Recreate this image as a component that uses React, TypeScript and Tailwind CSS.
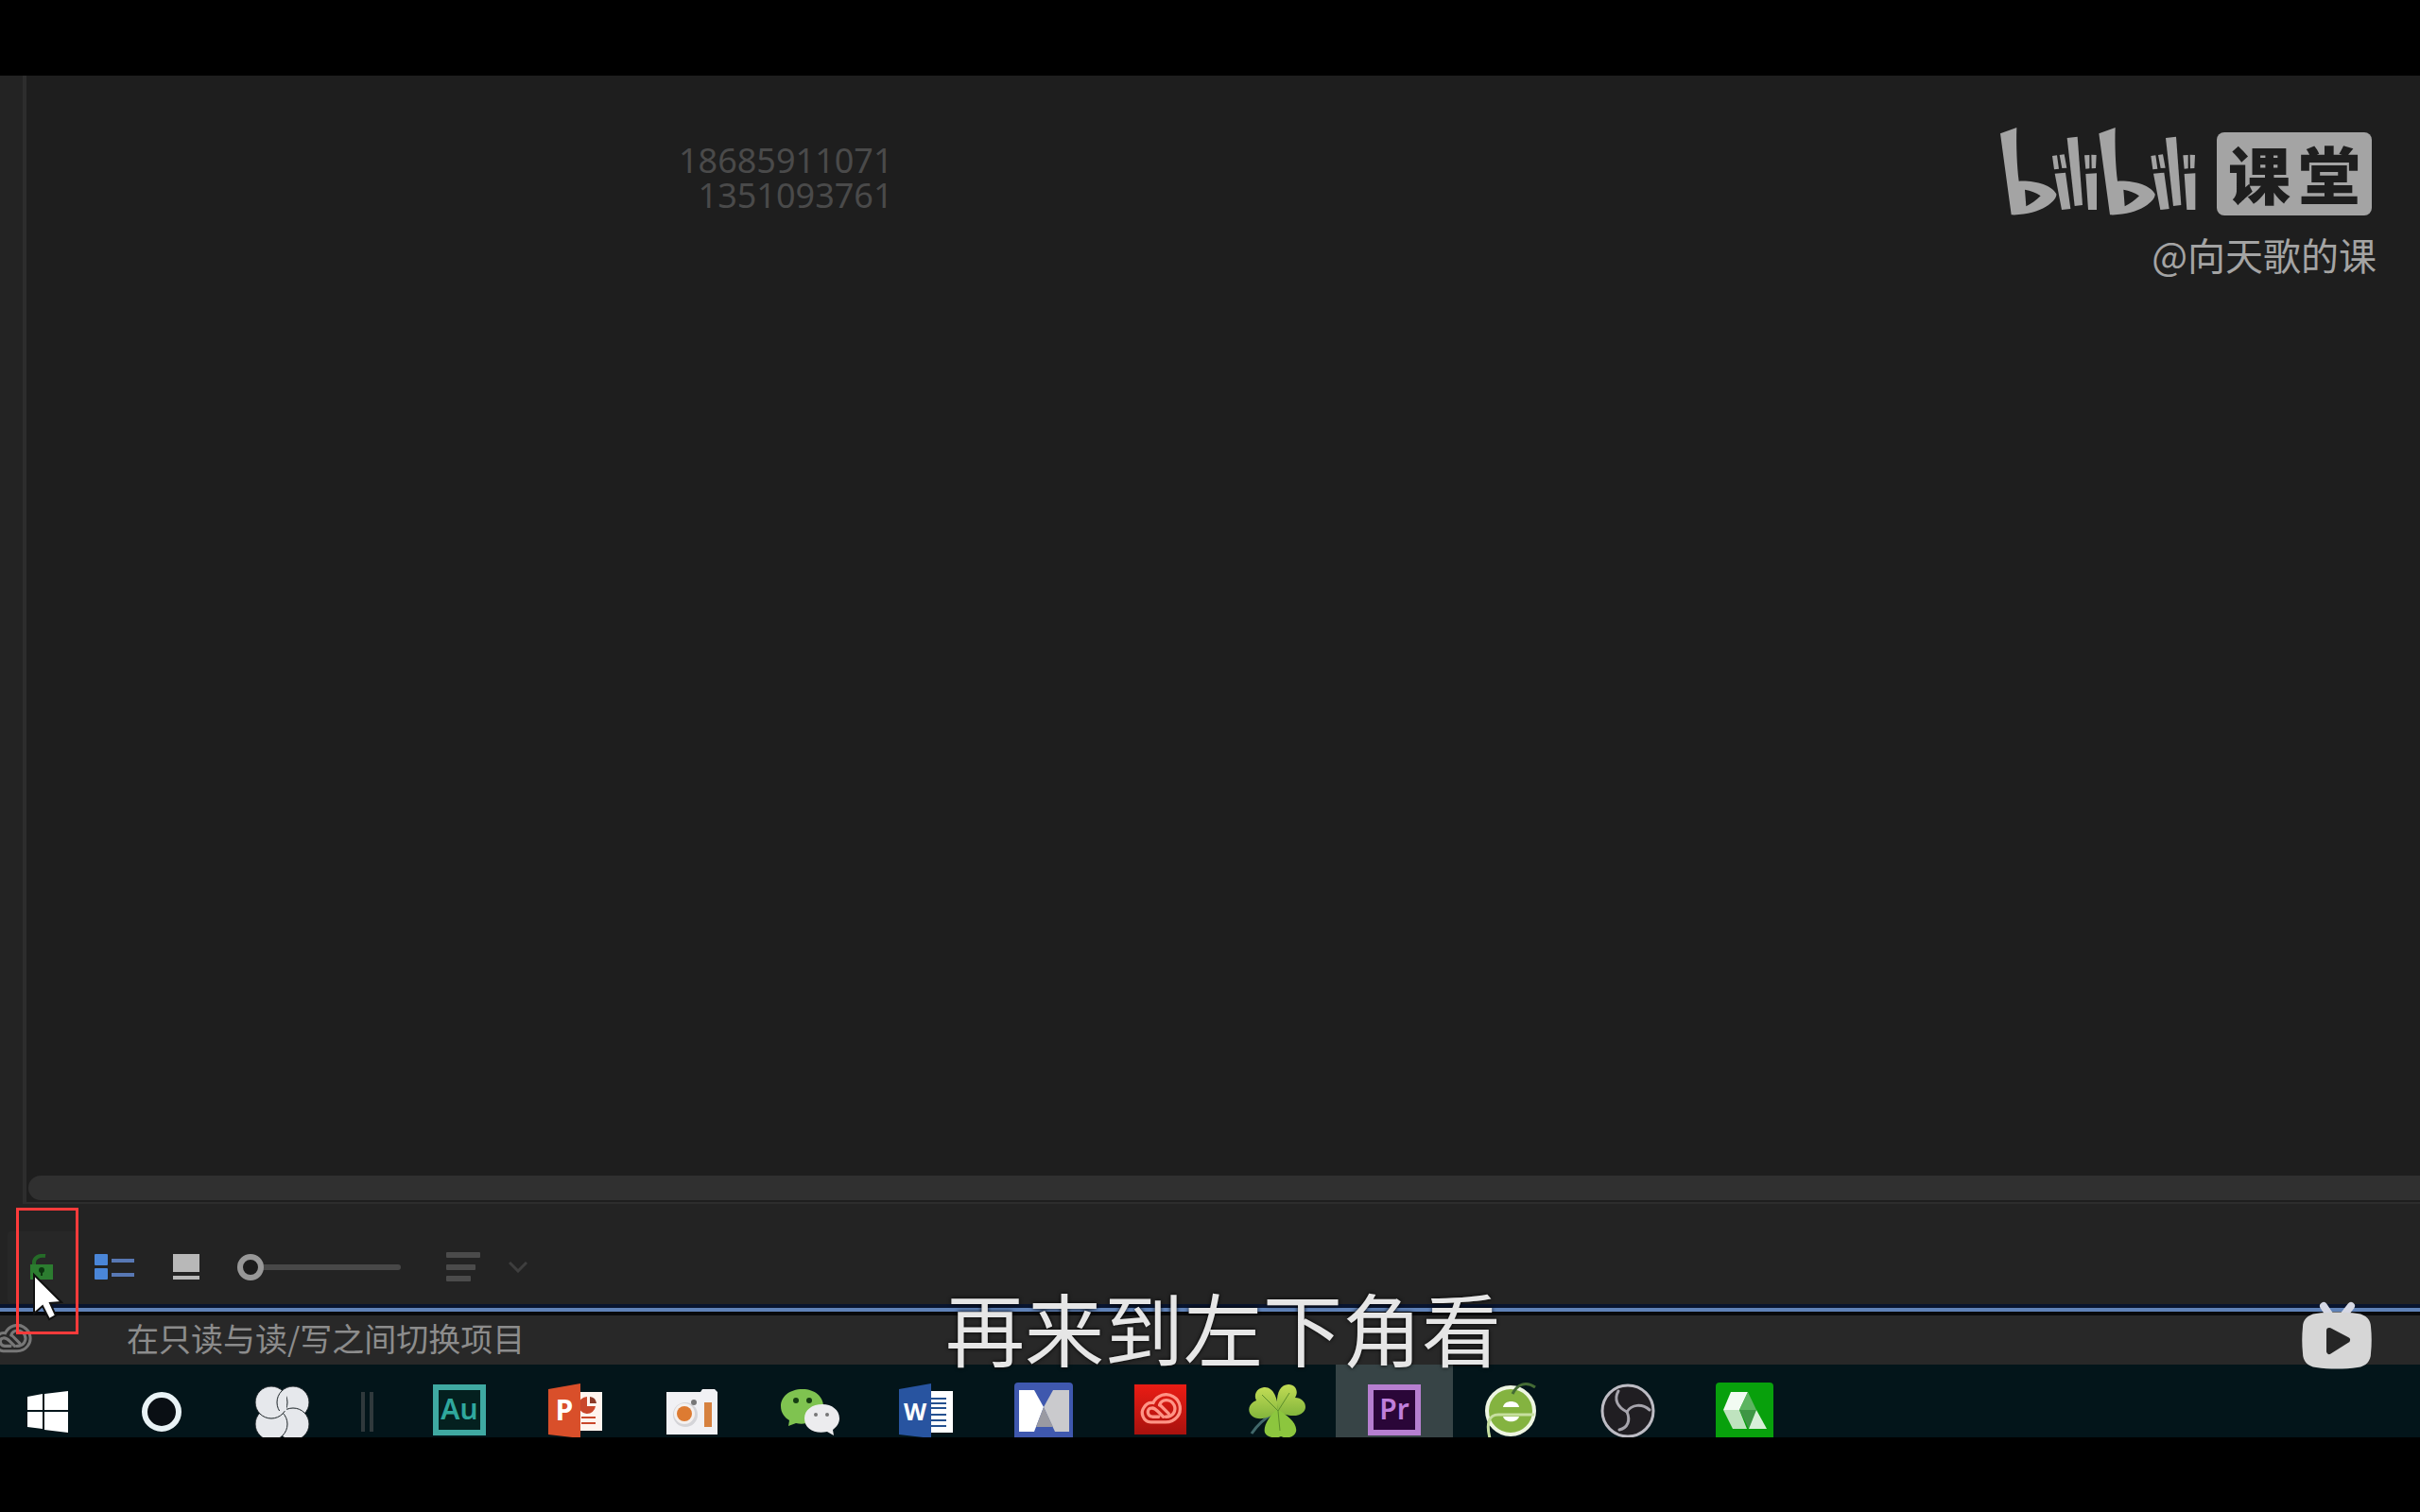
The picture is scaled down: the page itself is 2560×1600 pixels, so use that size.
import type { ReactNode } from "react";

const CJK = "font-['Noto_Sans_CJK_SC',sans-serif]";

/* ---------- watermark ---------- */

function Bili() {
  return (
    <>
      <path
        fillRule="evenodd"
        d="M108 92 L160 73 C158 130 161 195 167 243 C215 240 272 255 286 284 C290 304 235 353 143 350 Z M186 270 C205 273 222 280 236 290 C222 304 207 315 190 323 Z"
      />
      <path d="M273 163 L288 161 L294 204 L279 206 Z M296 160 L311 158 L319 201 L304 202 Z M281 219 L315 216 L331 331 L303 334 Z" />
      <path d="M320 106 L353 102 L369 319 L344 322 Z" />
      <path d="M375 161 L391 160 L391 203 L379 204 Z M397 159 L413 160 L411 202 L398 203 Z M379 220 L414 218 L414 334 L387 334 Z" />
    </>
  );
}

function Watermark() {
  return (
    <div className="absolute top-[54px] right-[46px] flex flex-col items-end text-[#a4a4a4]">
      <div className="mr-[5px] flex items-start">
        <svg className="h-[95px] w-[209px]" viewBox="105 70 627 285" fill="currentColor" role="img" aria-label="bilibili">
          <Bili />
          <g transform="translate(313 0)">
            <Bili />
          </g>
        </svg>
        <div
          className={`mt-[6px] ml-[21px] flex h-[88px] w-[164px] items-center justify-center gap-2 rounded-lg bg-[#a4a4a4] pb-1 text-[66px] leading-[66px] font-black text-[#1e1e1e] ${CJK}`}
        >
          <span>课</span>
          <span>堂</span>
        </div>
      </div>
      <div className={`mt-4 text-[40px] leading-[48px] ${CJK}`}>@向天歌的课</div>
    </div>
  );
}

/* ---------- toolbar ---------- */

function Cursor() {
  return (
    <svg className="absolute top-[72px] left-[34px] h-[52px] w-[34px]" viewBox="0 0 34 52">
      <path d="M2 3 L2 44 L11 36 L18 50 L25 46 L19 33 L31 32 Z" fill="#fff" stroke="#111" strokeWidth="2" />
    </svg>
  );
}

function Toolbar() {
  return (
    <div className="relative z-10 flex h-[106px] items-center bg-[#232323] pt-7 pl-2">
      <button aria-label="读写切换" className="flex h-[76px] w-[75px] items-center justify-center rounded bg-[#272727] pr-1">
        <svg className="h-7 w-7" viewBox="0 0 28 28">
          <path d="M6 14 V9 C6 4 11 1 18 2" fill="none" stroke="#256b28" strokeWidth="4" />
          <rect x="2" y="11" width="24" height="16" fill="#2c7d30" />
          <circle cx="14" cy="17" r="3" fill="#0c3510" />
          <rect x="13" y="18" width="2" height="5" fill="#0c3510" />
        </svg>
      </button>
      <button aria-label="列表视图" className="ml-4">
        <svg className="h-7 w-11" viewBox="0 0 44 28">
          <rect x="1" y="0" width="14" height="12" rx="1" fill="#4a86d8" />
          <rect x="1" y="15" width="14" height="12" rx="1" fill="#4a86d8" />
          <rect x="19" y="5" width="24" height="4" fill="#5878b4" />
          <rect x="19" y="20" width="24" height="4" fill="#5878b4" />
        </svg>
      </button>
      <button aria-label="图标视图" className="ml-10">
        <svg className="h-7 w-7" viewBox="0 0 28 28">
          <rect width="28" height="19" fill="#b8b8b8" />
          <rect y="23" width="28" height="4" fill="#b8b8b8" />
        </svg>
      </button>
      <input
        type="range"
        min="0"
        max="100"
        defaultValue="0"
        aria-label="缩放"
        className="ml-10 h-7 w-[173px] appearance-none bg-transparent [&::-webkit-slider-runnable-track]:h-[6px] [&::-webkit-slider-runnable-track]:rounded-sm [&::-webkit-slider-runnable-track]:bg-[#484848] [&::-webkit-slider-thumb]:mt-[-11px] [&::-webkit-slider-thumb]:size-7 [&::-webkit-slider-thumb]:appearance-none [&::-webkit-slider-thumb]:rounded-full [&::-webkit-slider-thumb]:border-[6px] [&::-webkit-slider-thumb]:border-[#989898] [&::-webkit-slider-thumb]:bg-[#1c1c1c]"
      />
      <button aria-label="排序" className="ml-12 flex items-center gap-7">
        <svg className="h-8 w-[38px]" viewBox="0 0 38 32" fill="#4b4b4b">
          <rect x="0" y="0" width="36" height="6" rx="1" />
          <rect x="0" y="13" width="31" height="6" rx="1" />
          <rect x="0" y="25" width="26" height="6" rx="1" />
        </svg>
        <svg className="h-3 w-5" viewBox="0 0 20 12" fill="none" stroke="#3e3e3e" strokeWidth="3">
          <path d="M1 1 L10 10 L19 1" />
        </svg>
      </button>
      <div className="absolute top-1 left-[17px] h-[134px] w-[66px] border-[3px] border-[#ff3b3b]" />
      <Cursor />
    </div>
  );
}

/* ---------- creative cloud mark ---------- */

function CloudMark() {
  return (
    <g fill="none" stroke="currentColor" strokeLinecap="round" strokeWidth="4">
      <path d="M14 39 C4 38 0 27 5 20 C8 15 12 13 17 14 C22 4 34 0 43 6 C53 12 54 25 48 32 C44 37 39 39 33 39 Z" />
      <path d="M33 32 C43 32 47 24 44 17 C39 8 28 9 25 17" />
      <path d="M24 32 H16 C9 31 8 22 14 21 C18 20 20 22 23 25 L30 32" />
      <path d="M27 18 L37 28" />
    </g>
  );
}

/* ---------- taskbar ---------- */

function Icon({ children }: { children: ReactNode }) {
  return (
    <svg className="size-16 shrink-0" viewBox="0 0 64 64">
      {children}
    </svg>
  );
}

function WindowsIcon() {
  return (
    <Icon>
      <path d="M11 18 L27 15 V32 H11 Z M29 15 L54 12 V32 H29 Z M11 34 H27 V52 L11 50 Z M29 34 H54 V56 L29 53 Z" fill="#fff" />
    </Icon>
  );
}

function RingIcon() {
  return (
    <Icon>
      <circle cx="32" cy="34" r="18" fill="#0a0f14" stroke="#e9f3f6" strokeWidth="6" />
    </Icon>
  );
}

function PetalsIcon() {
  return (
    <Icon>
      <clipPath id="petal-top">
        <rect x="0" y="0" width="37" height="33" />
      </clipPath>
      <g fill="#e6e8ec" stroke="#1b2226" strokeWidth="1">
        <circle cx="44" cy="24" r="17" />
        <circle cx="44" cy="47" r="17" />
        <circle cx="21" cy="47" r="17" />
        <circle cx="21" cy="24" r="17" />
        <circle cx="44" cy="24" r="17" clipPath="url(#petal-top)" />
      </g>
    </Icon>
  );
}

function AdobeIcon({ label, frame, fill, text }: { label: string; frame: string; fill: string; text: string }) {
  return (
    <Icon>
      <rect x="7" y="8" width="50" height="48" fill={fill} stroke={frame} strokeWidth="6" />
      <text
        x="32"
        y="42"
        textAnchor="middle"
        fontFamily="'Noto Sans', sans-serif"
        fontSize="30"
        fontWeight="600"
        fill={text}
      >
        {label}
      </text>
    </Icon>
  );
}

function OfficeCover({ letter, color }: { letter: string; color: string }) {
  return (
    <>
      <path d="M3 10 L37 4 V62 L3 58 Z" fill={color} />
      <text
        x="20"
        y="43"
        textAnchor="middle"
        fontFamily="'Open Sans', sans-serif"
        fontSize={letter === "W" ? 25 : 30}
        fontWeight="700"
        fill="#fff"
      >
        {letter}
      </text>
    </>
  );
}

function PowerPointIcon() {
  return (
    <Icon>
      <rect x="34" y="13" width="26" height="41" fill="#fff4ef" />
      <path d="M44 18 A9 9 0 1 0 53 28 L44 28 Z" fill="#c9472b" />
      <path d="M47 18 A8 8 0 0 1 54 25 H47 Z" fill="#8b3a28" />
      <path d="M38 40 H53 M38 46 H53" stroke="#c9472b" strokeWidth="2" />
      <OfficeCover letter="P" color="#d94f2a" />
    </Icon>
  );
}

function CameraIcon() {
  return (
    <Icon>
      <path d="M4 13 H40 L42 10 H55 L58 13 V58 H4 Z" fill="#f1f1f4" />
      <circle cx="24" cy="37" r="13" fill="#d4d4d8" />
      <circle cx="23" cy="36" r="11" fill="#f4f0ee" />
      <circle cx="23" cy="36" r="8" fill="#dd7b32" />
      <circle cx="33" cy="24" r="3" fill="#777" />
      <rect x="44" y="24" width="8" height="26" fill="#d6813f" />
    </Icon>
  );
}

function WeChatIcon() {
  return (
    <Icon>
      <path d="M24 10 C10 10 1 18 1 28 C1 35 5 40 10 43 L9 49 L17 46 C31 49 46 41 46 28 C46 18 37 10 24 10 Z" fill="#7fc350" />
      <circle cx="17" cy="22" r="3" fill="#153d12" />
      <circle cx="31" cy="22" r="3" fill="#153d12" />
      <path d="M45 26 C34 26 26 32 26 41 C26 52 37 58 50 55 L57 59 L56 53 C60 50 63 46 63 41 C63 32 55 26 45 26 Z" fill="#ececee" />
      <circle cx="38" cy="37" r="2" fill="#777" />
      <circle cx="50" cy="37" r="2" fill="#777" />
    </Icon>
  );
}

function WordIcon() {
  return (
    <Icon>
      <rect x="34" y="12" width="26" height="44" fill="#fff" />
      <path d="M37 20 H53 M37 25 H53 M37 30 H53 M37 37 H53 M37 43 H53 M37 49 H53" stroke="#24508f" strokeWidth="2" />
      <OfficeCover letter="W" color="#2854a0" />
    </Icon>
  );
}

function CrossIcon() {
  return (
    <Icon>
      <rect x="1" y="3" width="62" height="61" rx="4" fill="#3f58ae" />
      <path d="M6 11 H22 L32 29 L22 55 H6 Z" fill="#fff" />
      <path d="M59 11 H42 L32 29 L44 55 H59 Z" fill="#cacacd" />
      <path d="M32 29 L24 50 H42 Z" fill="#9a9aa2" />
    </Icon>
  );
}

function CreativeCloudIcon() {
  return (
    <Icon>
      <defs>
        <linearGradient id="cc-red" x1="0" y1="0" x2="0" y2="1">
          <stop offset="0" stopColor="#ea1c14" />
          <stop offset="1" stopColor="#a8120e" />
        </linearGradient>
      </defs>
      <rect x="4" y="5" width="55" height="53" fill="url(#cc-red)" />
      <g transform="translate(10 13) scale(0.82)" color="#ff9486">
        <CloudMark />
      </g>
    </Icon>
  );
}

function CloverIcon() {
  return (
    <Icon>
      <defs>
        <linearGradient id="leaf" x1="0" y1="0" x2="0" y2="1">
          <stop offset="0" stopColor="#c2dc55" />
          <stop offset="1" stopColor="#82b53c" />
        </linearGradient>
      </defs>
      <path d="M30 34 C20 40 11 48 5 57" fill="none" stroke="#41686a" strokeWidth="3" />
      <path d="M33 33 C33 20 28 7 18 8 C10 9 7 16 10 22 C2 25 0 33 5 38 C13 45 27 39 33 33 Z" fill="url(#leaf)" />
      <path d="M33 33 C30 20 33 5 44 5 C52 5 55 13 51 19 C60 19 65 28 60 34 C53 41 40 38 33 33 Z" fill="url(#leaf)" />
      <path d="M32 31 C24 38 17 49 19 56 C21 61 31 63 36 60 C42 63 50 61 52 55 C54 46 42 37 32 31 Z" fill="#8cc63e" />
      <path d="M16 16 L33 33 L45 14 M33 33 L35 54" fill="none" stroke="#5d8e2b" strokeWidth="1" />
    </Icon>
  );
}

function BrowserIcon() {
  return (
    <Icon>
      <circle cx="31" cy="33" r="25" fill="#84b340" stroke="#eef5e2" strokeWidth="4" />
      <path d="M23 29 C24 21 39 21 40 29 Z" fill="#fff" />
      <path d="M23 39 H40 C38 46 25 46 23 39 Z" fill="#fff" />
      <path d="M9 62 C5 46 8 37 18 37 H56" fill="none" stroke="#c7dfa0" strokeWidth="3" />
      <path d="M33 15 C38 5 47 1 57 8" fill="none" stroke="#446b35" strokeWidth="3" />
    </Icon>
  );
}

function ObsIcon() {
  return (
    <Icon>
      <circle cx="32" cy="33" r="27" fill="#201e22" stroke="#bdbcc4" strokeWidth="3" />
      <g fill="none" stroke="#a6a4ac" strokeWidth="3" strokeLinecap="round">
        <path d="M31 34 C21 29 17 21 22 12" />
        <path d="M31 34 C36 26 47 25 55 32" />
        <path d="M31 34 C35 43 32 51 23 53" />
      </g>
    </Icon>
  );
}

function GreenAppIcon() {
  return (
    <Icon>
      <rect x="1" y="3" width="61" height="61" rx="4" fill="#08a00c" />
      <path d="M17 13 H35 L26 32 H9 Z" fill="#f2fbf2" />
      <path d="M9 32 H26 L34 52 H19 Z" fill="#bfe3bf" />
      <path d="M35 13 L44 32 H26 Z" fill="#5db460" />
      <path d="M26 32 H44 L36 52 Z" fill="#3f9645" />
      <path d="M44 32 L55 52 H36 Z" fill="#d8efd8" />
    </Icon>
  );
}

const APPS: { name: string; icon: ReactNode; active?: boolean }[] = [
  { name: "Audition", icon: <AdobeIcon label="Au" frame="#3fa9a2" fill="#04201f" text="#2fa79d" /> },
  { name: "PowerPoint", icon: <PowerPointIcon /> },
  { name: "Camera", icon: <CameraIcon /> },
  { name: "WeChat", icon: <WeChatIcon /> },
  { name: "Word", icon: <WordIcon /> },
  { name: "Cross", icon: <CrossIcon /> },
  { name: "Creative Cloud", icon: <CreativeCloudIcon /> },
  { name: "Clover", icon: <CloverIcon /> },
  { name: "Premiere", icon: <AdobeIcon label="Pr" frame="#b67fd0" fill="#2a0638" text="#c07fdc" />, active: true },
  { name: "Browser", icon: <BrowserIcon /> },
  { name: "OBS", icon: <ObsIcon /> },
  { name: "Camtasia", icon: <GreenAppIcon /> },
];

function Taskbar() {
  return (
    <nav className="flex h-[77px] items-stretch overflow-hidden bg-[#03151a]">
      <button aria-label="开始" className="ml-[18px] flex pt-4">
        <WindowsIcon />
      </button>
      <button aria-label="搜索" className="ml-[57px] flex pt-4">
        <RingIcon />
      </button>
      <button aria-label="任务视图" className="ml-[63px] flex pt-4">
        <PetalsIcon />
      </button>
      <div className="mt-[29px] ml-[52px] h-[42px] w-[13px] border-x-4 border-[#30393c]" />
      <div className="ml-[29px] grid w-[1484px] grid-cols-12">
        {APPS.map((app) => (
          <button
            key={app.name}
            aria-label={app.name}
            className={app.active ? "flex justify-center bg-[#374446] pt-4" : "flex justify-center pt-4"}
          >
            {app.icon}
          </button>
        ))}
      </div>
    </nav>
  );
}

/* ---------- page ---------- */

function PlayerBadge() {
  return (
    <button aria-label="播放" className="absolute right-[50px] bottom-[151px] z-20">
      <svg className="h-[72px] w-[76px]" viewBox="0 0 76 72">
        <path d="M24 5 L30 14 M53 5 L46 14" stroke="#d6d8e4" strokeWidth="8" strokeLinecap="round" />
        <path
          d="M16 13 C30 11 46 11 60 13 C69 14 74 20 74 27 C75 36 75 46 74 55 C74 63 69 69 60 70 C46 72 30 72 16 70 C7 69 2 63 2 55 C1 46 1 36 2 27 C2 20 7 14 16 13 Z"
          fill="#d6d6d6"
        />
        <path d="M30 31 L49 41 L30 53 Z" fill="#262626" stroke="#262626" strokeWidth="6" strokeLinejoin="round" />
      </svg>
    </button>
  );
}

export default function App() {
  return (
    <div className="relative flex min-h-screen flex-col overflow-hidden bg-black">
      <div className="h-20" />
      <main className="relative flex flex-1 bg-[#232323] pl-6">
        <div className="flex flex-1 flex-col justify-end border-b-2 border-l-4 border-[#2d2d2d] bg-[#1e1e1e] pb-[2px] pl-[2px]">
          <div className="h-[26px] rounded-l-full bg-[#303030]" />
        </div>
        <p className="absolute top-[71px] left-[718px] text-right font-['Noto_Sans',sans-serif] text-[36px] leading-[37px] text-[#4a4a4a]">
          18685911071
          <br />
          1351093761
        </p>
        <Watermark />
      </main>
      <Toolbar />
      <div className="h-3 border-y-4 border-t-[#08142e] border-b-[#08090c] bg-[#5f82b8]" />
      <footer className="flex h-[52px] items-center bg-[#282828] pb-1">
        <svg className="-ml-[10px] h-8 w-12 text-[#777]" viewBox="-2 0 60 42">
          <CloudMark />
        </svg>
        <span className={`ml-24 text-[34px] leading-[44px] text-[#8c8c8c] ${CJK}`}>在只读与读/写之间切换项目</span>
      </footer>
      <Taskbar />
      <div className="h-[79px]" />
      <p
        className={`absolute inset-x-0 bottom-[152px] z-20 pl-7 text-center text-[84px] leading-[88px] text-[#e6e6e6] [text-shadow:0_0_4px_#000] ${CJK}`}
      >
        再来到左下角看
      </p>
      <PlayerBadge />
    </div>
  );
}
